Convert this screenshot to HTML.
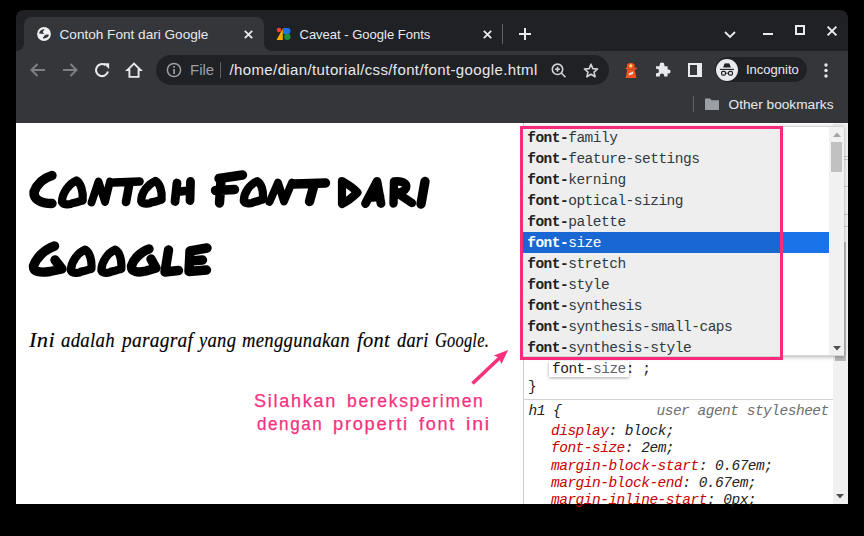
<!DOCTYPE html>
<html><head><meta charset="utf-8">
<style>
html,body{margin:0;padding:0;width:864px;height:536px;overflow:hidden;background:#000;font-family:"Liberation Sans",sans-serif;}
.a{position:absolute;}
.win{left:16px;top:10px;width:832px;height:494px;background:#202124;border-radius:8px 8px 0 0;overflow:hidden;}
.tabtxt{color:#e8eaed;font-size:13.4px;white-space:nowrap;line-height:16px;}
.ttl{font-weight:700;color:#000;-webkit-text-stroke:2px #000;font-size:43px;line-height:60px;letter-spacing:4.5px;white-space:nowrap;transform-origin:0 0;}
.big{font-size:50px;}
.pw{font-family:"Liberation Serif",serif;font-style:italic;font-size:20.5px;letter-spacing:0.3px;-webkit-text-stroke:0.15px #000;line-height:24px;white-space:nowrap;color:#000;transform-origin:0 0;}
.aw{font-size:18px;line-height:20px;letter-spacing:1.7px;-webkit-text-stroke:0.25px #f8307d;white-space:nowrap;color:#f8307d;transform-origin:0 0;}
.mono{font-family:"Liberation Mono",monospace;font-size:14.5px;letter-spacing:-0.5px;white-space:pre;}
</style></head><body>
<div class="a win"></div>
<!-- active tab -->
<div class="a" style="left:24px;top:17px;width:240px;height:40px;background:#35363a;border-radius:8px 8px 0 0;"></div>
<!-- tab bottom flares -->
<div class="a" style="left:16px;top:43px;width:8px;height:8px;background:#35363a;"></div>
<div class="a" style="left:16px;top:43px;width:8px;height:8px;background:#202124;border-radius:0 0 8px 0;"></div>
<div class="a" style="left:264px;top:43px;width:8px;height:8px;background:#35363a;"></div>
<div class="a" style="left:264px;top:43px;width:8px;height:8px;background:#202124;border-radius:0 0 0 8px;"></div>
<!-- toolbar + bookmarks -->
<div class="a" style="left:16px;top:51px;width:832px;height:72px;background:#35363a;"></div>
<!-- content -->
<div class="a" style="left:16px;top:123px;width:832px;height:381px;background:#fff;"></div>

<!-- tab 1 -->
<svg class="a" style="left:36px;top:26px" width="16" height="16" viewBox="0 0 16 16"><circle cx="8" cy="8" r="6.9" fill="#eef0f2"/><path d="M8.7 3C7.2 3.2 5.8 3.6 4.6 4.6C3.6 5.5 3.1 6.5 3.1 7.5C4.1 7.7 5 7.7 6 7.8C7 7.9 7.9 8 8.7 8.2C8 7.8 7.2 7.3 7.1 6.8C6.9 6.3 6.9 5.8 7 5.5C7.5 4.6 8.2 3.8 8.7 3Z" fill="#35363a"/><path d="M12.6 8.4C11.6 8.4 10.6 8.5 9.8 8.7C9.2 8.9 8.7 9.2 8.6 9.3C8.3 9.8 8.1 10.3 8 10.4C7.5 11 7 11.5 6.6 11.9C7.2 12.4 7.8 12.6 8.4 12.6C9.4 12.4 10.4 12.1 11.1 11.6C11.9 11 12.4 10.4 12.6 9.8C12.7 9.3 12.7 8.8 12.6 8.4Z" fill="#35363a"/></svg>
<div class="a tabtxt" style="left:59.5px;top:27px;font-size:13.6px;">Contoh Font dari Google</div>
<svg class="a" style="left:243.5px;top:29.5px" width="9" height="9" viewBox="0 0 9 9"><path d="M0.8 0.8L8.2 8.2M8.2 0.8L0.8 8.2" stroke="#e8eaed" stroke-width="1.8"/></svg>

<!-- tab 2 -->
<svg class="a" style="left:276px;top:27px" width="16" height="14" viewBox="0 0 16 14">
<path d="M0.5 13 L6.8 13 L6.8 1.5 Z" fill="#f9ab00"/>
<circle cx="3" cy="3" r="2.3" fill="#ea4335"/>
<path d="M7 1 h4.5 a3 3 0 0 1 0 6 h-4.5z" fill="#1a73e8"/>
<circle cx="11.3" cy="9.8" r="3.2" fill="#1e8e3e"/>
</svg>
<div class="a tabtxt" style="left:299.5px;top:27px;font-size:13px;">Caveat - Google Fonts</div>
<svg class="a" style="left:482.5px;top:29.5px" width="9" height="9" viewBox="0 0 9 9"><path d="M0.8 0.8L8.2 8.2M8.2 0.8L0.8 8.2" stroke="#e8eaed" stroke-width="1.8"/></svg>
<div class="a" style="left:502px;top:24px;width:1px;height:20px;background:#5f6368;"></div>
<svg class="a" style="left:517px;top:26px" width="16" height="16" viewBox="0 0 16 16"><path d="M8 2V14M2 8H14" stroke="#e8eaed" stroke-width="2"/></svg>

<!-- window controls -->
<svg class="a" style="left:723px;top:28px" width="14" height="12" viewBox="0 0 14 12"><path d="M2 4L7 9L12 4" stroke="#e8eaed" stroke-width="1.8" fill="none"/></svg>
<div class="a" style="left:763px;top:33px;width:10px;height:2px;background:#e8eaed;"></div>
<div class="a" style="left:795px;top:25px;width:6px;height:6px;border:2px solid #e8eaed;"></div>
<svg class="a" style="left:826px;top:24.5px" width="12" height="12" viewBox="0 0 12 12"><path d="M1.6 1.6L10.4 10.4M10.4 1.6L1.6 10.4" stroke="#e8eaed" stroke-width="2"/></svg>


<!-- toolbar -->
<svg class="a" style="left:29px;top:62px" width="18" height="16" viewBox="0 0 18 16"><path d="M16 8H3M8.5 2L2.5 8L8.5 14" stroke="#7e8084" stroke-width="2" fill="none"/></svg>
<svg class="a" style="left:61px;top:62px" width="18" height="16" viewBox="0 0 18 16"><path d="M2 8H15M9.5 2L15.5 8L9.5 14" stroke="#7e8084" stroke-width="2" fill="none"/></svg>
<svg class="a" style="left:93px;top:62px" width="18" height="17" viewBox="0 0 18 17"><path d="M12.4 3.1A6 6 0 1 0 14.9 9.4" stroke="#e8eaed" stroke-width="2.1" fill="none"/><path d="M10.3 1.3H16.1V7.1Z" fill="#e8eaed"/></svg>
<svg class="a" style="left:125px;top:61px" width="18" height="18" viewBox="0 0 18 18"><path d="M9 2.6L2.4 9H4.4V15.9H13.6V9H15.6Z" stroke="#e8eaed" stroke-width="1.9" fill="none" stroke-linejoin="miter"/></svg>
<!-- omnibox -->
<div class="a" style="left:156px;top:55px;width:453px;height:30px;background:#202124;border-radius:15px;"></div>
<svg class="a" style="left:166px;top:62px" width="16" height="16" viewBox="0 0 16 16"><circle cx="8" cy="8" r="6.6" stroke="#9aa0a6" stroke-width="1.5" fill="none"/><rect x="7.2" y="7" width="1.7" height="5" fill="#9aa0a6"/><rect x="7.2" y="4" width="1.7" height="1.7" fill="#9aa0a6"/></svg>
<div class="a" style="left:190px;top:61px;color:#9aa0a6;font-size:15px;line-height:18px;white-space:nowrap">File</div>
<div class="a" style="left:220px;top:62px;width:1px;height:16px;background:#5f6368;"></div>
<div class="a" style="left:229.5px;top:61px;color:#e8eaed;font-size:15px;line-height:18px;letter-spacing:0.38px;white-space:nowrap">/home/dian/tutorial/css/font/font-google.html</div>
<svg class="a" style="left:550px;top:61.5px" width="18" height="17" viewBox="0 0 18 17"><circle cx="7.5" cy="7.3" r="5.2" stroke="#d2d4d7" stroke-width="1.6" fill="none"/><path d="M11.3 11L15.5 15.2M5 7.3H10M7.5 4.8V9.8" stroke="#d2d4d7" stroke-width="1.6"/></svg>
<svg class="a" style="left:582px;top:62px" width="18" height="17" viewBox="0 0 18 17"><path d="M9 2.2L10.8 6.6L15.6 7L12 10.1L13.1 14.8L9 12.3L4.9 14.8L6 10.1L2.4 7L7.2 6.6Z" stroke="#d2d4d7" stroke-width="1.6" fill="none" stroke-linejoin="round"/></svg>
<!-- extensions -->
<svg class="a" style="left:624px;top:60px" width="14" height="20" viewBox="0 0 14 20"><path d="M3 7.8V4.6Q6.8 0.8 10.6 4.6V7.8Z" fill="#f4511e"/><rect x="1.6" y="7.4" width="11.2" height="2.2" rx="1" fill="#f4511e"/><path d="M3.3 9.4H10.7L12.4 18H1.6Z" fill="#f4511e"/><circle cx="6.8" cy="5.9" r="1.6" fill="#f2e46e"/><path d="M4.9 13.4L9.2 11.6V13.7L4.9 15.4Z" fill="#e8eaed"/></svg>
<svg class="a" style="left:655px;top:62px" width="16" height="16" viewBox="0 0 16 16"><path d="M1 4.3H4.6V3A2.4 2.4 0 0 1 9.4 3V4.3H12.6V7.6H13.6A2 2 0 0 1 13.6 11.6H12.6V14.6H9.2V13.6A2.2 2.2 0 0 0 4.8 13.6V14.6H1V11.2H1.8A2.2 2.2 0 0 0 1.8 6.8H1Z" fill="#e8eaed"/></svg>
<div class="a" style="left:688px;top:63px;width:14px;height:14px;background:#e8eaed;"></div><div class="a" style="left:690px;top:65px;width:7px;height:10px;background:#35363a;"></div>
<div class="a" style="left:715px;top:57px;width:92px;height:25px;background:#202124;border-radius:12.5px;"></div>
<div class="a" style="left:716px;top:58.5px;width:22px;height:22px;background:#e8eaed;border-radius:50%;"></div>
<svg class="a" style="left:717px;top:59px" width="20" height="20" viewBox="0 0 20 20"><path d="M6.1 8.5L7.5 4.7Q8.8 3.9 10 4.6Q11.2 3.9 12.5 4.7L13.9 8.5Z" fill="#202124"/><path d="M3 10.4H17" stroke="#202124" stroke-width="1.1"/><rect x="4.6" y="12.3" width="3.8" height="3.9" rx="1.2" stroke="#202124" stroke-width="1.2" fill="none"/><rect x="11.6" y="12.3" width="3.8" height="3.9" rx="1.2" stroke="#202124" stroke-width="1.2" fill="none"/><path d="M8.4 14.2H11.6" stroke="#202124" stroke-width="1"/></svg>
<div class="a" style="left:746px;top:62px;color:#e8eaed;font-size:13px;line-height:16px;white-space:nowrap">Incognito</div>
<svg class="a" style="left:822px;top:62px" width="8" height="17" viewBox="0 0 8 17"><circle cx="4" cy="3" r="1.7" fill="#e8eaed"/><circle cx="4" cy="8.5" r="1.7" fill="#e8eaed"/><circle cx="4" cy="14" r="1.7" fill="#e8eaed"/></svg>
<!-- bookmarks bar -->
<div class="a" style="left:693px;top:96px;width:1px;height:16px;background:#5f6368;"></div>
<svg class="a" style="left:704px;top:97px" width="16" height="14" viewBox="0 0 16 14"><path d="M1 1.5H6L7.6 3.2H15V13H1Z" fill="#9aa0a6"/></svg>
<div class="a" style="left:728.5px;top:97px;color:#e8eaed;font-size:13.7px;line-height:16px;white-space:nowrap">Other bookmarks</div>

<!-- page content -->
<svg class="a" id="title" style="left:0;top:0" width="520" height="300" viewBox="0 0 520 300"><g fill="none" stroke="#000" stroke-width="9.4" stroke-linecap="round" stroke-linejoin="round">
<path d="M52 175.5C44 178 37 184 34 192C33.5 199 40 203.5 52 203.5"/>
<path stroke-width="8.2" d="M76.4 180.4C69.4 183.4 62.0 193.0 62.0 202.0C63.0 205.0 70.0 205.0 72.3 203.2C79.6 202.0 83.6 199.5 82.6 200.5C83.6 191.5 80.4 182.4 76.4 180.4Z"/>
<path stroke-width="7.8" d="M91.5 202.5L98.5 181.5L105 202L110 181.5"/>
<path stroke-width="8.6" d="M114 182.5L139.5 181.5M129.5 183L126 202"/>
<path stroke-width="8.2" d="M155.4 180.9C148.4 183.9 141.2 192.2 141.2 201.2C142.2 204.2 149.2 204.2 151.4 202.4C158.5 201.2 162.5 198.7 161.5 199.7C162.5 190.7 159.4 182.9 155.4 180.9Z"/>
<path stroke-width="8.8" d="M177 183L175 201.5M176 192L189 190.5M190.5 181.5L190 200.5"/>
<path d="M219 178.5L242.5 175M221 180L219.5 203M215.5 190.5L234.5 189.5"/>
<path stroke-width="8.2" d="M257.2 181.2C250.2 184.2 243.8 192.0 243.8 201.0C244.8 204.0 251.8 204.0 253.3 202.2C259.8 201.0 263.8 198.5 262.8 199.5C263.8 190.5 261.2 183.2 257.2 181.2Z"/>
<path stroke-width="7.8" d="M269.5 202L278 182.5L284 201.5L292 182.5"/>
<path d="M294.5 184L325.5 183M314 185L309.5 201.5"/>
<path stroke-width="8.2" d="M342 181C349 185 354 188 357.5 192.5C353 197 348 201 342 204Z"/>
<path stroke-width="8.8" d="M365.5 203.5L377 181.5L381 203.5M370 197.5L380 196.5"/>
<path stroke-width="8.4" d="M394 181.5L393.5 203.5M394 181.5C402 180.5 407.5 183 406 188C404 192 398 193 394.5 193M400 195L412 203"/>
<path d="M425 181.5L421 204"/>
<path d="M54.5 246C44 250 36 258 33.5 266C33 272 40 273 50 271.5L62 269L55 260"/>
<path stroke-width="8.2" d="M85.2 249.6C78.2 252.6 70.9 261.4 70.9 270.4C71.9 273.4 78.9 273.4 81.1 271.6C88.3 270.4 92.3 267.9 91.3 268.9C92.3 259.9 89.2 251.6 85.2 249.6Z"/>
<path stroke-width="8.2" d="M115.3 249.6C108.3 252.6 101.4 261.4 101.4 270.4C102.4 273.4 109.4 273.4 111.3 271.6C118.2 270.4 122.2 267.9 121.2 268.9C122.2 259.9 119.3 251.6 115.3 249.6Z"/>
<path d="M149 249C140 252 133 260 131.5 266C131 272 138 273 146 271L156 268L151 259"/>
<path d="M168.5 250L165 272L178.5 270.5"/>
<path d="M190 251L207 248M190 251L189 271M190 261L202.5 260M189 271.5L206.5 270"/>
</g></svg>
<!-- paragraph -->
<div class="a pw" id="p0" style="left:29.08px;top:328px;transform:scaleX(1.0977)">Ini</div>
<div class="a pw" id="p1" style="left:60.62px;top:328px;transform:scaleX(0.9172)">adalah</div>
<div class="a pw" id="p2" style="left:121.51px;top:328px;transform:scaleX(0.9467)">paragraf</div>
<div class="a pw" id="p3" style="left:198.94px;top:328px;transform:scaleX(0.9062)">yang</div>
<div class="a pw" id="p4" style="left:242.00px;top:328px;transform:scaleX(0.9116)">menggunakan</div>
<div class="a pw" id="p5" style="left:357.00px;top:328px;transform:scaleX(0.9949)">font</div>
<div class="a pw" id="p6" style="left:397.00px;top:328px;transform:scaleX(0.8929)">dari</div>
<div class="a pw" id="p7" style="left:434.71px;top:328px;transform:scaleX(0.7991)">Google.</div>
<!-- annotation -->
<div class="a aw" id="a0" style="left:254.23px;top:391px;transform:scaleX(1.0028)">Silahkan</div>
<div class="a aw" id="a1" style="left:346.86px;top:391px;transform:scaleX(0.9739)">bereksperimen</div>
<div class="a aw" id="b0" style="left:256.67px;top:414px;transform:scaleX(0.9439)">dengan</div>
<div class="a aw" id="b1" style="left:332.56px;top:414px;transform:scaleX(1.0145)">properti</div>
<div class="a aw" id="b2" style="left:418.90px;top:414px;transform:scaleX(1.0082)">font</div>
<div class="a aw" id="b3" style="left:466.18px;top:414px;transform:scaleX(1.0794)">ini</div>
<svg class="a" style="left:460px;top:340px" width="60" height="60" viewBox="460 340 60 60"><path d="M472.5 383.5L500 357.5" stroke="#f8307d" stroke-width="3.6"/><path d="M508.2 350L493.8 355.4L498.7 357.4L501.4 363.9Z" fill="#f8307d"/></svg>

<!-- devtools -->
<div class="a" style="left:523px;top:123px;width:1px;height:381px;background:#cbcdd1;"></div>
<div class="a" style="left:833px;top:123px;width:15px;height:381px;background:#f1f1f1;"></div>
<div class="a" style="left:835px;top:242px;width:11px;height:119px;background:#b9b9b9;"></div>
<svg class="a" style="left:835px;top:492px" width="10" height="8" viewBox="0 0 10 8"><path d="M1 2H9L5 6.5Z" fill="#505050"/></svg>
<div class="a" style="left:844px;top:156px;width:4px;height:1px;background:#c8c8c8;"></div>
<div class="a" style="left:844px;top:159px;width:4px;height:1px;background:#c8c8c8;"></div>
<div class="a" style="left:844px;top:186px;width:4px;height:1px;background:#c8c8c8;"></div>
<div class="a" style="left:844px;top:214px;width:4px;height:1px;background:#c8c8c8;"></div>
<div class="a" style="left:844px;top:226px;width:4px;height:1px;background:#c8c8c8;"></div>
<!-- font-size editing row -->
<div class="a" style="left:549px;top:360.5px;width:80px;height:16px;background:#fff;box-shadow:0 1px 3px rgba(0,0,0,0.35);"></div>
<div class="a mono" style="left:552px;top:361.3px;line-height:17px;color:#202124">font-<span style="color:#5f6368">size</span>: ;</div>
<div class="a mono" style="left:528px;top:378.5px;line-height:17px;color:#202124">}</div>
<div class="a" style="left:524px;top:398.5px;width:309px;height:1px;background:#d0d2d6;"></div>
<div class="a mono" style="left:528.5px;top:402.5px;line-height:17px;font-style:italic;color:#202124">h1 {</div>
<div class="a mono" style="left:656.5px;top:402.5px;line-height:17px;font-style:italic;color:#6e6e6e">user agent stylesheet</div>
<div class="a mono" style="left:551px;top:423px;line-height:17.35px;font-style:italic;color:#202124"><span style="color:#c80000">display</span>: block;
<span style="color:#c80000">font-size</span>: 2em;
<span style="color:#c80000">margin-block-start</span>: 0.67em;
<span style="color:#c80000">margin-block-end</span>: 0.67em;
<span style="color:#c80000">margin-inline-start</span>: 0px;</div>

<!-- autocomplete dropdown -->
<div class="a" style="left:523px;top:126px;width:321px;height:230px;background:#fff;border:1px solid #d6d6d6;box-sizing:border-box;box-shadow:0 1px 4px rgba(0,0,0,0.3);overflow:hidden;"></div>
<div class="a" style="left:523px;top:129px;width:257px;height:227px;background:#eeeeee;"></div>
<div class="a" style="left:523px;top:232px;width:306px;height:21px;background:#1a73e8;"></div>
<div class="a" style="left:523px;top:232px;width:257px;height:21px;background:#1967d2;"></div>
<div class="a" style="left:523px;top:126px;width:321px;height:230px;overflow:hidden;">
<div style="position:absolute;left:-523px;top:-126px;width:864px;height:536px">
<div class="a mono" style="left:527.2px;top:130px;line-height:17px;color:#303942"><b style="color:#202124">font-</b>family</div>
<div class="a mono" style="left:527.2px;top:151px;line-height:17px;color:#303942"><b style="color:#202124">font-</b>feature-settings</div>
<div class="a mono" style="left:527.2px;top:172px;line-height:17px;color:#303942"><b style="color:#202124">font-</b>kerning</div>
<div class="a mono" style="left:527.2px;top:193px;line-height:17px;color:#303942"><b style="color:#202124">font-</b>optical-sizing</div>
<div class="a mono" style="left:527.2px;top:214px;line-height:17px;color:#303942"><b style="color:#202124">font-</b>palette</div>
<div class="a mono" style="left:527.2px;top:235px;line-height:17px;color:#fff"><b style="color:#fff">font-</b>size</div>
<div class="a mono" style="left:527.2px;top:256px;line-height:17px;color:#303942"><b style="color:#202124">font-</b>stretch</div>
<div class="a mono" style="left:527.2px;top:277px;line-height:17px;color:#303942"><b style="color:#202124">font-</b>style</div>
<div class="a mono" style="left:527.2px;top:298px;line-height:17px;color:#303942"><b style="color:#202124">font-</b>synthesis</div>
<div class="a mono" style="left:527.2px;top:319px;line-height:17px;color:#303942"><b style="color:#202124">font-</b>synthesis-small-caps</div>
<div class="a mono" style="left:527.2px;top:340px;line-height:17px;color:#303942"><b style="color:#202124">font-</b>synthesis-style</div>

</div></div>
<div class="a" style="left:829px;top:127px;width:15px;height:228px;background:#f1f1f1;"></div>
<div class="a" style="left:831px;top:142px;width:11px;height:30px;background:#c1c1c1;"></div>
<svg class="a" style="left:832px;top:131px" width="10" height="8" viewBox="0 0 10 8"><path d="M1 6H9L5 1.5Z" fill="#a3a3a3"/></svg>
<svg class="a" style="left:832px;top:344px" width="10" height="8" viewBox="0 0 10 8"><path d="M1 2H9L5 6.5Z" fill="#505050"/></svg>
<!-- pink rect -->
<div class="a" style="left:520px;top:126px;width:263px;height:234px;box-sizing:border-box;border:3px solid #fa2b7b;"></div>
</body></html>
